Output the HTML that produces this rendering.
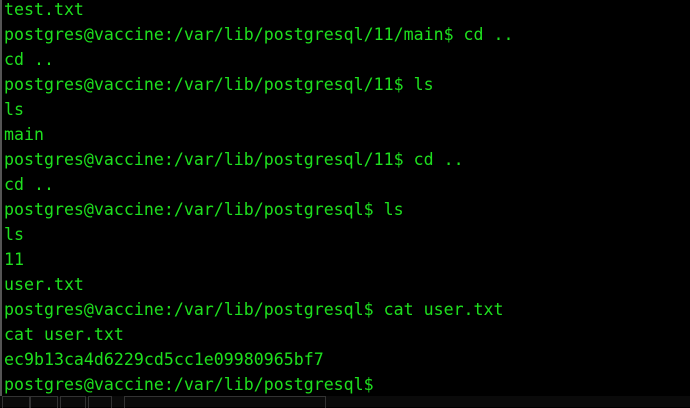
<!DOCTYPE html>
<html><head><style>
html,body{margin:0;padding:0;background:#000;width:690px;height:407px;overflow:hidden}
.t{position:absolute;left:4px;top:-3px;font-family:"DejaVu Sans Mono","Liberation Mono",monospace;font-size:16.6px;line-height:25px;color:#1ee01e;white-space:pre}
.b{position:absolute;left:0;top:0;width:2px;height:407px;background:#555}
.bar{position:absolute;left:0;top:396px;width:690px;height:11px;background:#0a0a0a}
.bar span{position:absolute;top:0;height:11px;border:1px solid #333;border-bottom:none}
</style></head><body>
<div class="b"></div>
<div class="t">test.txt
postgres@vaccine:/var/lib/postgresql/11/main$ cd ..
cd ..
postgres@vaccine:/var/lib/postgresql/11$ ls
ls
main
postgres@vaccine:/var/lib/postgresql/11$ cd ..
cd ..
postgres@vaccine:/var/lib/postgresql$ ls
ls
11
user.txt
postgres@vaccine:/var/lib/postgresql$ cat user.txt
cat user.txt
ec9b13ca4d6229cd5cc1e09980965bf7
postgres@vaccine:/var/lib/postgresql$ </div>
<div class="bar"><span style="left:2px;width:26px"></span><span style="left:30px;width:26px"></span><span style="left:60px;width:24px"></span><span style="left:88px;width:22px"></span><span style="left:124px;width:200px"></span></div>
</body></html>
